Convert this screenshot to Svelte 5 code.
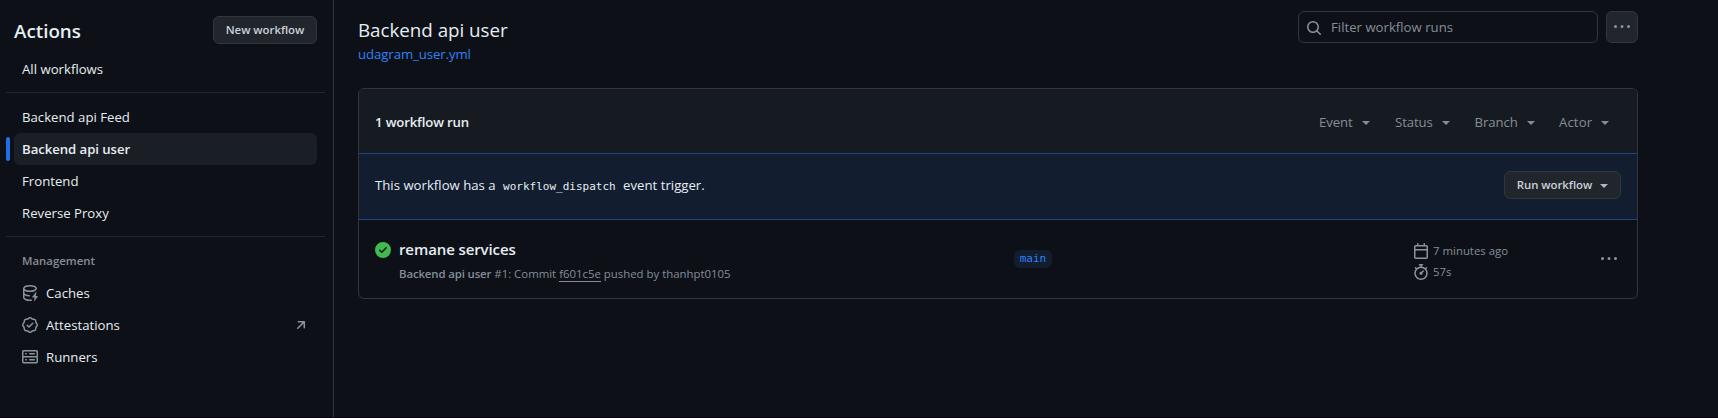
<script>
  const workflows = ['Backend api Feed', 'Backend api user', 'Frontend', 'Reverse Proxy'];
  const selected = 'Backend api user';

  const filters = [
    { name: 'Event', width: 76 },
    { name: 'Status', width: 79.5 },
    { name: 'Branch', width: 84.5 },
    { name: 'Actor', width: 50 }
  ];

  const icons = {
    cache:
      'M2.5 5.724V8c0 .248.238.7 1.169 1.159.874.43 2.144.745 3.62.822a.75.75 0 1 1-.078 1.498c-1.622-.085-3.102-.432-4.204-.975a5.565 5.565 0 0 1-.507-.28V12.5c0 .133.058.318.282.551.227.237.591.483 1.101.707 1.015.447 2.47.742 4.117.742.406 0 .802-.018 1.183-.052a.751.751 0 1 1 .134 1.494C8.89 15.98 8.45 16 8 16c-1.805 0-3.475-.32-4.721-.869-.623-.274-1.173-.619-1.579-1.041-.408-.425-.7-.964-.7-1.59v-9c0-.626.292-1.165.7-1.591.406-.42.956-.766 1.579-1.04C4.525.32 6.195 0 8 0c1.806 0 3.476.32 4.721.869.623.274 1.173.619 1.579 1.041.408.425.7.964.7 1.59 0 .626-.292 1.165-.7 1.591-.406.42-.956.766-1.578 1.04C11.475 6.68 9.805 7 8 7c-1.805 0-3.475-.32-4.721-.869a6.15 6.15 0 0 1-.779-.407Zm0-2.224c0 .133.058.318.282.551.227.237.591.483 1.101.707C4.898 5.205 6.353 5.5 8 5.5c1.646 0 3.101-.295 4.118-.742.508-.224.873-.471 1.1-.708.224-.232.282-.417.282-.55 0-.133-.058-.318-.282-.551-.227-.237-.591-.483-1.101-.707C11.102 1.795 9.647 1.5 8 1.5c-1.646 0-3.101.295-4.118.742-.508.224-.873.471-1.1.708-.224.232-.282.417-.282.55ZM14.49 7.582a.375.375 0 0 0-.66-.313l-3.625 4.625a.375.375 0 0 0 .295.606h2.127l-.619 2.922a.375.375 0 0 0 .666.304l3.125-4.125A.375.375 0 0 0 15.5 11h-1.778l.769-3.418Z',
    verified:
      'm9.585.52.929.68c.153.112.331.186.518.215l1.138.175a2.678 2.678 0 0 1 2.24 2.24l.174 1.139c.029.187.103.365.215.518l.68.928a2.677 2.677 0 0 1 0 3.17l-.68.928a1.174 1.174 0 0 0-.215.518l-.175 1.138a2.678 2.678 0 0 1-2.241 2.241l-1.138.175a1.17 1.17 0 0 0-.518.215l-.928.68a2.677 2.677 0 0 1-3.17 0l-.928-.68a1.174 1.174 0 0 0-.518-.215L3.83 14.41a2.678 2.678 0 0 1-2.24-2.24l-.175-1.138a1.17 1.17 0 0 0-.215-.518l-.68-.928a2.677 2.677 0 0 1 0-3.17l.68-.928c.112-.153.186-.331.215-.518l.175-1.14a2.678 2.678 0 0 1 2.24-2.24l1.139-.175c.187-.029.365-.103.518-.215l.928-.68a2.677 2.677 0 0 1 3.17 0ZM7.303 1.728l-.927.68a2.67 2.67 0 0 1-1.18.489l-1.137.174a1.179 1.179 0 0 0-.987.987l-.174 1.136a2.677 2.677 0 0 1-.489 1.18l-.68.928a1.18 1.18 0 0 0 0 1.394l.68.927c.256.348.424.753.489 1.18l.174 1.137c.078.509.478.909.987.987l1.136.174a2.67 2.67 0 0 1 1.18.489l.928.68c.414.305.979.305 1.394 0l.927-.68a2.67 2.67 0 0 1 1.18-.489l1.137-.174a1.18 1.18 0 0 0 .987-.987l.174-1.136a2.67 2.67 0 0 1 .489-1.18l.68-.928a1.176 1.176 0 0 0 0-1.394l-.68-.927a2.686 2.686 0 0 1-.489-1.18l-.174-1.137a1.179 1.179 0 0 0-.987-.987l-1.136-.174a2.677 2.677 0 0 1-1.18-.489l-.928-.68a1.176 1.176 0 0 0-1.394 0ZM11.28 6.78l-3.75 3.75a.75.75 0 0 1-1.06 0L4.72 8.78a.751.751 0 0 1 .018-1.042.751.751 0 0 1 1.042-.018L7 8.94l3.22-3.22a.751.751 0 0 1 1.042.018.751.751 0 0 1 .018 1.042Z',
    server:
      'M1.75 1h12.5c.966 0 1.75.784 1.75 1.75v4c0 .372-.116.717-.314 1 .198.283.314.628.314 1v4a1.75 1.75 0 0 1-1.75 1.75H1.75A1.75 1.75 0 0 1 0 12.75v-4c0-.358.109-.707.314-1a1.739 1.739 0 0 1-.314-1v-4C0 1.784.784 1 1.75 1ZM1.5 2.75v4c0 .138.112.25.25.25h12.5a.25.25 0 0 0 .25-.25v-4a.25.25 0 0 0-.25-.25H1.75a.25.25 0 0 0-.25.25Zm.25 5.75a.25.25 0 0 0-.25.25v4c0 .138.112.25.25.25h12.5a.25.25 0 0 0 .25-.25v-4a.25.25 0 0 0-.25-.25ZM7 4.75A.75.75 0 0 1 7.75 4h4.5a.75.75 0 0 1 0 1.5h-4.5A.75.75 0 0 1 7 4.75ZM7.75 10h4.5a.75.75 0 0 1 0 1.5h-4.5a.75.75 0 0 1 0-1.5ZM3 4.75A.75.75 0 0 1 3.75 4h.5a.75.75 0 0 1 0 1.5h-.5A.75.75 0 0 1 3 4.75ZM3.75 10h.5a.75.75 0 0 1 0 1.5h-.5a.75.75 0 0 1 0-1.5Z',
    arrow:
      'M4.53 4.75A.75.75 0 0 1 5.28 4h6.01a.75.75 0 0 1 .75.75v6.01a.75.75 0 0 1-1.5 0v-4.2l-5.26 5.261a.749.749 0 0 1-1.275-.326.749.749 0 0 1 .215-.734L9.48 5.5h-4.2a.75.75 0 0 1-.75-.75Z',
    search:
      'M10.68 11.74a6 6 0 0 1-7.922-8.982 6 6 0 0 1 8.982 7.922l3.04 3.04a.749.749 0 0 1-.326 1.275.749.749 0 0 1-.734-.215ZM11.5 7a4.499 4.499 0 1 0-8.997 0A4.499 4.499 0 0 0 11.5 7Z',
    kebab:
      'M8 9a1.5 1.5 0 1 0 0-3 1.5 1.5 0 0 0 0 3ZM1.5 9a1.5 1.5 0 1 0 0-3 1.5 1.5 0 0 0 0 3Zm13 0a1.5 1.5 0 1 0 0-3 1.5 1.5 0 0 0 0 3Z',
    success:
      'M8 16A8 8 0 1 1 8 0a8 8 0 0 1 0 16Zm3.78-9.72a.751.751 0 0 0-.018-1.042.751.751 0 0 0-1.042-.018L6.75 9.19 5.28 7.72a.751.751 0 0 0-1.042.018.751.751 0 0 0-.018 1.042l2 2a.75.75 0 0 0 1.06 0Z',
    calendar:
      'M4.75 0a.75.75 0 0 1 .75.75V2h5V.75a.75.75 0 0 1 1.5 0V2h1.25c.966 0 1.75.784 1.75 1.75v10.5A1.75 1.75 0 0 1 13.25 16H2.75A1.75 1.75 0 0 1 1 14.25V3.75C1 2.784 1.784 2 2.75 2H4V.75A.75.75 0 0 1 4.75 0ZM2.5 7.5v6.75c0 .138.112.25.25.25h10.5a.25.25 0 0 0 .25-.25V7.5Zm10.75-4H2.75a.25.25 0 0 0-.25.25V6h11V3.75a.25.25 0 0 0-.25-.25Z',
    stopwatch:
      'M5.75.75A.75.75 0 0 1 6.5 0h3a.75.75 0 0 1 0 1.5h-.75v1l-.001.041a6.724 6.724 0 0 1 3.464 1.435l.007-.006.75-.75a.749.749 0 0 1 1.275.326.749.749 0 0 1-.215.734l-.75.75-.006.007a6.75 6.75 0 1 1-10.548 0L2.72 5.03l-.75-.75a.751.751 0 0 1 .018-1.042.751.751 0 0 1 1.042-.018l.75.75.007.006A6.72 6.72 0 0 1 7.25 2.541V1.5H6.5a.75.75 0 0 1-.75-.75ZM8 14.5a5.25 5.25 0 1 0-.001-10.501A5.25 5.25 0 0 0 8 14.5Zm.389-6.7 1.33-1.33a.75.75 0 1 1 1.061 1.06L9.45 8.861A1.503 1.503 0 0 1 8 10.75a1.499 1.499 0 1 1 .389-2.95Z'
  };

  const management = [
    { name: 'Caches', icon: 'cache' },
    { name: 'Attestations', icon: 'verified', external: true },
    { name: 'Runners', icon: 'server' }
  ];
</script>

{#snippet icon(name)}
  <svg class="icon" viewBox="0 0 16 16" width="16" height="16" aria-hidden="true"><path d={icons[name]} /></svg>
{/snippet}

<div class="page">
  <aside class="sidebar">
    <header class="side-head">
      <h2>Actions</h2>
      <button class="btn new">New workflow</button>
    </header>
    <nav>
      <a class="item all">All workflows</a>
      <hr />
      {#each workflows as name}
        <a class="item" class:active={name === selected}>{name}</a>
      {/each}
      <hr />
      <h3>Management</h3>
      {#each management as entry}
        <a class="item">
          {@render icon(entry.icon)}
          <span class="label">{entry.name}</span>
          {#if entry.external}{@render icon('arrow')}{/if}
        </a>
      {/each}
    </nav>
  </aside>

  <main>
    <header class="main-head">
      <div class="title">
        <h1>Backend api user</h1>
        <a class="file">udagram_user.yml</a>
      </div>
      <div class="search">{@render icon('search')}<span>Filter workflow runs</span></div>
      <button class="btn square">{@render icon('kebab')}</button>
    </header>

    <section class="box">
      <div class="box-head">
        <strong>1 workflow run</strong>
        <div class="filters">
          {#each filters as f}
            <span class="filter" style="width: {f.width}px">{f.name}<i class="caret"></i></span>
          {/each}
        </div>
      </div>
      <div class="dispatch">
        <p>This workflow has a <code>workflow_dispatch</code> event trigger.</p>
        <button class="btn run-btn">Run workflow<i class="caret"></i></button>
      </div>
      <div class="run">
        <span class="status">{@render icon('success')}</span>
        <div class="info">
          <a class="run-title">remane services</a>
          <div class="meta"><b>Backend api user</b> #1: Commit <a class="sha">f601c5e</a> pushed by thanhpt0105</div>
        </div>
        <div class="branch-cell"><span class="branch">main</span></div>
        <div class="times">
          <span>{@render icon('calendar')}7 minutes ago</span>
          <span>{@render icon('stopwatch')}57s</span>
        </div>
        <span class="more">{@render icon('kebab')}</span>
      </div>
    </section>
  </main>
</div>

<style>
  :global(body) {
    background: #0d1117;
  }
  .page {
    box-sizing: border-box;
    display: flex;
    height: 418px;
    overflow: hidden;
    background: #0d1117;
    border-bottom: 1px solid #09040e;
    color: #e6edf3;
    font: 400 13.2px/20px 'Open Sans', 'Noto Sans', sans-serif;
  }
  h1, h2, h3, p {
    margin: 0;
    font-weight: 400;
  }
  .icon {
    flex: none;
    display: block;
    fill: #8b949e;
  }
  .btn {
    box-sizing: border-box;
    display: flex;
    align-items: center;
    justify-content: center;
    height: 28px;
    margin: 0;
    padding: 0;
    border: 1px solid #30363d;
    border-radius: 6px;
    background: #21262d;
    color: #c9d1d9;
    font: 600 11.4px/20px 'Open Sans', 'Noto Sans', sans-serif;
    letter-spacing: -0.03px;
    white-space: nowrap;
  }
  .caret {
    width: 0;
    height: 0;
    margin-top: 2px;
    border: 4px solid transparent;
    border-top-color: currentColor;
    border-bottom: 0;
  }

  .sidebar {
    box-sizing: border-box;
    flex: none;
    width: 334px;
    padding: 16px 14px 0 6px;
    border-right: 1px solid #30363d;
  }
  .side-head {
    display: flex;
    align-items: center;
    justify-content: space-between;
    height: 28px;
    padding: 0 2px 0 8px;
    margin-bottom: 9px;
  }
  h2 {
    font-size: 18.8px;
    font-weight: 600;
    line-height: 28px;
    padding-top: 2px;
  }
  .new {
    width: 104px;
  }
  nav {
    display: flex;
    flex-direction: column;
  }
  .item {
    box-sizing: border-box;
    display: flex;
    align-items: center;
    gap: 8px;
    height: 32px;
    margin: 0 2px 0 8px;
    padding: 0 8px;
    border-radius: 6px;
  }
  .label {
    flex: 1;
  }
  .active {
    position: relative;
    background: #1a1f25;
    font-weight: 600;
    letter-spacing: -0.06px;
  }
  .active::before {
    content: '';
    position: absolute;
    left: -8px;
    top: 4px;
    width: 4px;
    height: 24px;
    border-radius: 6px;
    background: #1f6feb;
  }
  hr {
    width: 319px;
    height: 1px;
    margin: 7px 0 8px;
    border: 0;
    background: #21262d;
  }
  h3 {
    margin: 0 16px;
    padding: 6px 0;
    color: #848d97;
    font-size: 11.4px;
    font-weight: 600;
    line-height: 20px;
  }

  main {
    box-sizing: border-box;
    flex: 1;
    padding: 11px 80px 0 24px;
  }
  .main-head {
    display: flex;
    align-items: flex-start;
    height: 77px;
  }
  .title {
    flex: 1;
    padding-top: 4px;
  }
  h1 {
    font-size: 18.8px;
    line-height: 30px;
    letter-spacing: -0.03px;
  }
  .file {
    display: block;
    line-height: 18px;
    color: #2f81f7;
    letter-spacing: -0.08px;
  }
  .search {
    box-sizing: border-box;
    display: flex;
    align-items: center;
    gap: 9px;
    width: 300px;
    height: 32px;
    padding: 0 7px;
    border: 1px solid #30363d;
    border-radius: 6px;
    color: #848d97;
  }
  .search .icon {
    margin-top: 2px;
  }
  .square {
    width: 32px;
    height: 32px;
    margin-left: 8px;
  }

  .box {
    box-sizing: border-box;
    height: 211px;
    border: 1px solid #30363d;
    border-radius: 6px;
  }
  .box-head {
    display: flex;
    align-items: center;
    justify-content: space-between;
    height: 64px;
    padding: 0 28px 0 16px;
    border-radius: 5px 5px 0 0;
    background: #161b22;
  }
  .box-head strong {
    padding-top: 1px;
    font-weight: 600;
    letter-spacing: -0.15px;
  }
  .filters {
    display: flex;
    padding-top: 1px;
    color: #848d97;
  }
  .filter {
    display: flex;
    align-items: center;
    gap: 9px;
    letter-spacing: -0.1px;
  }
  .filter:last-child {
    letter-spacing: 0.1px;
  }
  .dispatch {
    display: flex;
    align-items: center;
    justify-content: space-between;
    height: 65px;
    padding: 0 16px;
    border: solid #1c4785;
    border-width: 1px 0;
    background: #121d2f;
  }
  .dispatch p {
    padding-bottom: 3px;
  }
  code {
    margin: 0 4px;
    font: 11px 'DejaVu Sans Mono', monospace;
  }
  .run-btn {
    width: 117px;
    gap: 8px;
    margin-bottom: 3px;
  }
  .run-btn .caret {
    border-top-color: #b0b8c0;
  }
  .run {
    display: flex;
    height: 78px;
    padding: 0 20px 0 16px;
  }
  .status {
    padding-top: 22px;
    margin-right: 8px;
  }
  .status .icon {
    fill: #3fb950;
  }
  .info {
    width: 615px;
    padding-top: 18px;
  }
  .run-title {
    display: block;
    font-size: 15px;
    font-weight: 600;
    line-height: 22px;
    letter-spacing: -0.1px;
  }
  .meta {
    margin-top: 4px;
    color: #848d97;
    font-size: 11.4px;
    line-height: 20px;
    white-space: nowrap;
  }
  .meta b {
    font-weight: 600;
    letter-spacing: -0.12px;
  }
  .sha {
    display: inline-block;
    line-height: 15px;
    border-bottom: 1px solid #848d97;
  }
  .branch-cell {
    width: 399px;
    padding-top: 30px;
  }
  .branch {
    display: block;
    width: 38px;
    height: 18px;
    border-radius: 6px;
    background: #121d2f;
    color: #2f81f7;
    font: 11px/18px 'DejaVu Sans Mono', monospace;
    text-align: center;
  }
  .times {
    flex: 1;
    padding-top: 20px;
    color: #848d97;
    font-size: 11.4px;
  }
  .times span {
    display: flex;
    align-items: center;
    gap: 4px;
    height: 21px;
  }
  .more {
    padding-top: 31px;
  }
</style>
